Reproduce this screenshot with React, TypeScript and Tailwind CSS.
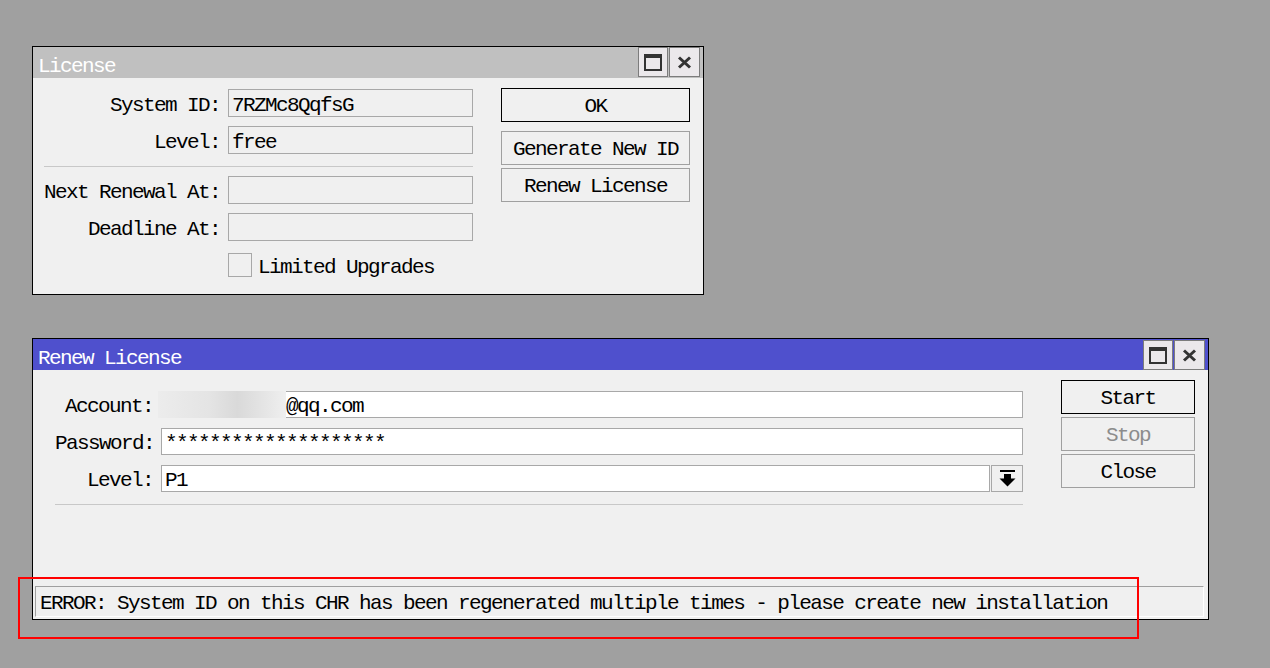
import React from "react";

const F = "font-['Liberation_Mono','Courier_New',monospace] text-[21px] tracking-[-1.6px] leading-none whitespace-nowrap";

function TitleButtons() {
  return (
    <div className="flex gap-[1px] h-[30px]">
      <div className="w-[30px] h-[30px] bg-[#ebe8eb] border border-[#7c7c7c] flex items-center justify-center">
        <svg width="18" height="17" viewBox="0 0 18 17">
          <rect x="1" y="1" width="16" height="15" fill="none" stroke="#333" strokeWidth="2" />
          <rect x="0" y="0" width="18" height="4" fill="#333" />
        </svg>
      </div>
      <div className="w-[31px] h-[30px] bg-[#ebe8eb] border border-[#7c7c7c] flex items-center justify-center">
        <svg width="15" height="13" viewBox="0 0 15 13">
          <path d="M2 1.5 L13 11.5 M13 1.5 L2 11.5" stroke="#333" strokeWidth="3" fill="none" />
        </svg>
      </div>
    </div>
  );
}

function Btn({ label, primary, disabled, w, h }: { label: string; primary?: boolean; disabled?: boolean; w: string; h: string }) {
  return (
    <div
      className={`${w} ${h} bg-[#f0f0f0] border ${primary ? "border-black" : "border-[#a0a0a0]"} flex items-center justify-center pt-[3px] ${F} ${disabled ? "text-[#8c8c8c]" : "text-black"}`}
    >
      {label}
    </div>
  );
}

function LicenseField({ label, value }: { label: string; value?: string }) {
  return (
    <div className="flex items-center gap-[8px] h-[28px]">
      <div className={`w-[176px] text-right text-black pt-[4px] ${F}`}>{label}</div>
      <div className={`w-[245px] h-[28px] border border-[#a8a8a8] bg-[#f0f0f0] pl-[3px] pt-[4px] flex items-center text-black ${F}`}>
        {value}
      </div>
    </div>
  );
}

function RenewLabel({ children }: { children: React.ReactNode }) {
  return <div className={`w-[98px] text-right text-black pt-[4px] ${F}`}>{children}</div>;
}

export default function App() {
  return (
    <div className="relative w-[1270px] h-[668px] bg-[#a0a0a0] pl-[32px] pt-[46px] overflow-hidden">
      {/* License window */}
      <div className="w-[672px] h-[249px] border border-black bg-[#f0f0f0] flex flex-col">
        <div className="h-[31px] bg-[#c0c0c0] flex items-start justify-between pl-[5px] pr-[3px]">
          <div className={`h-[31px] flex items-center pt-[7px] text-white ${F}`}>License</div>
          <TitleButtons />
        </div>
        <div className="flex pl-[11px]">
          <div className="flex flex-col pt-[11px]">
            <LicenseField label="System ID:" value="7RZMc8QqfsG" />
            <div className="mt-[9px]">
              <LicenseField label="Level:" value="free" />
            </div>
            <div className="mt-[12px] h-px w-[429px] bg-[#c8c8c8]" />
            <div className="mt-[9px]">
              <LicenseField label="Next Renewal At:" />
            </div>
            <div className="mt-[9px]">
              <LicenseField label="Deadline At:" />
            </div>
            <div className="mt-[11px] pl-[184px] flex items-center gap-[6px]">
              <div className="w-[24px] h-[24px] border border-[#a8a8a8] bg-[#f0f0f0]" />
              <div className={`text-black pt-[5px] ${F}`}>Limited Upgrades</div>
            </div>
          </div>
          <div className="ml-[28px] pt-[10px] flex flex-col">
            <Btn label="OK" primary w="w-[189px]" h="h-[34px]" />
            <div className="mt-[9px]">
              <Btn label="Generate New ID" w="w-[189px]" h="h-[34px]" />
            </div>
            <div className="mt-[3px]">
              <Btn label="Renew License" w="w-[189px]" h="h-[34px]" />
            </div>
          </div>
        </div>
      </div>

      {/* Renew License window */}
      <div className="mt-[43px] w-[1177px] h-[282px] border border-black bg-[#f0f0f0] flex flex-col">
        <div className="h-[31px] bg-[#4f50cd] flex items-start justify-between pl-[5px] pr-[3px]">
          <div className={`h-[31px] flex items-center pt-[7px] text-white ${F}`}>Renew License</div>
          <div className="pt-[1px]">
            <TitleButtons />
          </div>
        </div>
        <div className="flex-1 flex pl-[22px]">
          <div className="flex flex-col pt-[21px]">
            <div className="flex items-center gap-[8px] h-[27px]">
              <RenewLabel>Account:</RenewLabel>
              <div className={`w-[862px] h-[27px] border border-[#a8a8a8] bg-white flex items-center text-black ${F}`}>
                <div className="-ml-[4px] -my-[1px] h-[27px] w-[128px] bg-[linear-gradient(90deg,#ececec_0%,#e4e4e4_40%,#d9d9d9_62%,#e6e6e6_85%,#efefef_100%)]" />
                <span className="pt-[4px]">@qq.com</span>
              </div>
            </div>
            <div className="mt-[10px] flex items-center gap-[8px] h-[27px]">
              <RenewLabel>Password:</RenewLabel>
              <div className={`w-[862px] h-[27px] border border-[#a8a8a8] bg-white pl-[3px] pt-[4px] flex items-center text-black ${F}`}>
                ********************
              </div>
            </div>
            <div className="mt-[10px] flex items-center gap-[8px] h-[27px]">
              <RenewLabel>Level:</RenewLabel>
              <div className="flex gap-[1px]">
                <div className={`w-[829px] h-[27px] border border-[#a8a8a8] bg-white pl-[3px] pt-[4px] flex items-center text-black ${F}`}>
                  P1
                </div>
                <div className="w-[32px] h-[27px] border border-[#a8a8a8] bg-[#f0f0f0] flex items-center justify-center">
                  <svg width="17" height="17" viewBox="0 0 17 17">
                    <rect x="1" y="0" width="15" height="2" fill="#000" />
                    <rect x="5" y="4" width="7" height="5" fill="#000" />
                    <polygon points="0.5,8.5 16.5,8.5 8.5,16.5" fill="#000" />
                  </svg>
                </div>
              </div>
            </div>
            <div className="mt-[12px] h-px w-[968px] bg-[#c8c8c8]" />
          </div>
          <div className="ml-[38px] pt-[10px] flex flex-col">
            <Btn label="Start" primary w="w-[134px]" h="h-[34px]" />
            <div className="mt-[3px]">
              <Btn label="Stop" disabled w="w-[134px]" h="h-[34px]" />
            </div>
            <div className="mt-[3px]">
              <Btn label="Close" w="w-[134px]" h="h-[34px]" />
            </div>
          </div>
        </div>
        <div className="ml-[2px] mr-[4px] mb-[2px] h-[31px] border-t border-l border-[#a0a0a0] border-r border-b border-r-white border-b-white flex items-center pl-[4px] pt-[4px]">
          <span className={`text-black ${F}`}>
            ERROR: System ID on this CHR has been regenerated multiple times - please create new installation
          </span>
        </div>
      </div>

      {/* red annotation */}
      <div className="absolute left-[18px] top-[577px] w-[1121px] h-[62px] border-2 border-[#ff0000]" />
    </div>
  );
}
